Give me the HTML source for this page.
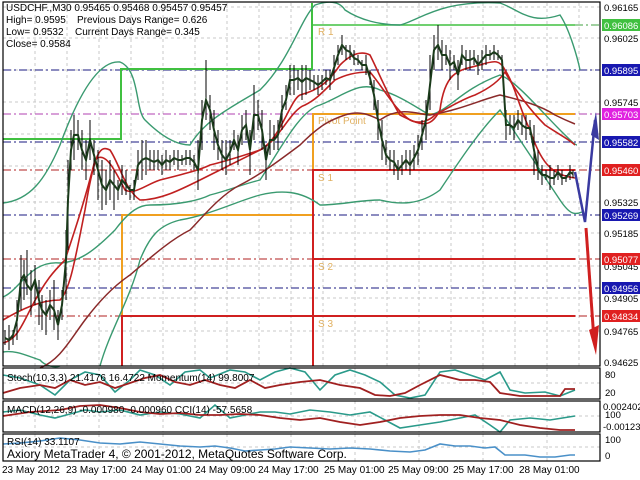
<!DOCTYPE html>
<html><head><meta charset="utf-8"><style>
html,body{margin:0;padding:0;background:#fff;width:640px;height:480px;overflow:hidden}
svg{display:block;font-family:"Liberation Sans",sans-serif}
</style></head><body>
<svg width="640" height="480" viewBox="0 0 640 480" xmlns="http://www.w3.org/2000/svg">
<rect width="640" height="480" fill="#fff"/>
<g stroke="#c8c8c8" stroke-width="1" stroke-dasharray="3,3">
<path d="M35 3V366M67 3V366M99 3V366M131 3V366M163 3V366M195 3V366M227 3V366M259 3V366M291 3V366M323 3V366M355 3V366M387 3V366M419 3V366M451 3V366M483 3V366M515 3V366M547 3V366M579 3V366"/>
<path d="M3 7H600M3 38H600M3 70H600M3 102H600M3 134H600M3 166H600M3 202H600M3 233H600M3 266H600M3 298H600M3 331H600"/>
<path d="M35 368V398M99 368V398M163 368V398M227 368V398M291 368V398M355 368V398M419 368V398M483 368V398M547 368V398M3 383H600"/>
<path d="M35 401V432M99 401V432M163 401V432M227 401V432M291 401V432M355 401V432M419 401V432M483 401V432M547 401V432M3 416H600"/>
<path d="M35 434V461M99 434V461M163 434V461M227 434V461M291 434V461M355 434V461M419 434V461M483 434V461M547 434V461M3 447H600"/>
</g>
<g stroke-width="1" stroke-dasharray="8,3,2,3">
<path d="M3 70H600M3 142H600M3 215H600M3 288H600" stroke="#1a1a80"/>
<path d="M3 114H600" stroke="#b040b0"/>
<path d="M3 170H600M3 259H600M3 316H600" stroke="#b02020"/>
<path d="M575 25H600" stroke="#40a040"/>
</g>
<g fill="none" stroke-width="2">
<path d="M3 139H121V69H312V3" stroke="#40c040"/>
<path d="M312 25H575" stroke="#40c040" stroke-width="1.5"/>
<path d="M122 366V215H313V114H575" stroke="#f0a020"/>
<path d="M122 366V316H313" stroke="#d02020"/>
<path d="M313 366V170H575M313 259H575M313 316H575" stroke="#d02020"/>
</g>
<g fill="#e0b060" font-size="10">
<text x="318" y="35">R 1</text><text x="318" y="124">Pivot Point</text><text x="318" y="181">S 1</text><text x="318" y="270">S 2</text><text x="318" y="327">S 3</text>
</g>
<g fill="none" stroke="#3a9a70" stroke-width="1.4">
<path d="M3 203C30 200 45 180 60 145C80 90 100 60 120 62C140 70 135 110 145 120C160 135 175 145 190 145C205 120 230 108 260 90C290 60 300 20 315 5C330 0 340 2 345 10C360 20 380 25 400 25C420 20 440 0 500 3C520 10 530 25 560 15C570 30 578 60 580 70"/>
<path d="M3 297C20 290 30 260 60 263C80 262 95 250 115 230C130 210 140 205 150 205C180 205 200 200 210 195C230 190 240 185 260 180C280 150 300 110 320 105C345 95 360 80 380 90C400 95 420 110 430 115C450 110 460 90 500 75C515 80 540 110 560 130C570 140 575 145 577 145"/>
<path d="M3 352C15 350 25 355 40 360C45 366 55 368 60 366M100 366C110 330 130 300 140 260C150 235 160 225 180 220C210 215 240 200 260 195C280 190 300 190 320 205C340 205 360 200 380 200C400 205 420 205 440 190C460 160 480 130 500 110C520 140 540 170 560 200C570 215 575 215 582 212"/>
</g>
<g fill="none" stroke="#8a2a2a" stroke-width="1.5">
<path d="M40 368C60 360 70 340 85 320C100 300 115 285 130 275C150 258 170 240 190 230C200 220 220 195 240 185C260 175 280 160 300 145C320 125 330 120 345 115C360 110 370 115 380 120C400 105 420 115 430 115C460 110 480 100 500 95C520 100 540 105 555 115C565 120 570 122 575 124"/>
</g>
<g fill="none" stroke="#c02020" stroke-width="1.6">
<path d="M3 343C15 340 20 330 30 310C45 280 55 270 65 260C75 230 85 200 95 160C105 150 115 170 125 190C135 195 145 185 160 180C180 175 200 170 210 165C230 160 245 155 260 150C280 140 290 110 305 105C315 100 320 95 335 80C345 75 355 72 370 72C385 90 395 110 410 120C420 125 430 120 435 115C445 110 460 100 475 95C490 88 500 80 505 72C515 90 530 110 545 125C560 135 570 140 575 145"/>
<path d="M3 320C20 310 40 300 60 300C70 290 75 260 85 210C95 150 100 145 110 150C120 165 125 190 140 200C160 200 180 190 200 180C220 170 240 160 260 150C280 140 290 100 300 95C320 90 330 80 340 65C350 55 360 50 370 55C380 75 390 100 400 115C420 125 430 130 440 110C445 70 460 70 480 65C495 60 500 60 505 70C515 85 520 110 530 130C540 160 550 175 575 178"/>
</g>
<g fill="none" stroke="#000" stroke-width="1">
<path d="M5 330V345M9 325V350M13 330V345M17 300V340M21 255V310M24 260V300M27 250V295M31 270V315M35 265V305M39 280V325M42 295V330M46 300V335M50 290V320M54 280V330M58 310V340M62 290V320M66 230V300M68 160V250M71 130V170M74 115V160M78 120V150M82 130V170M86 140V180M90 120V160M94 140V175M98 150V200M102 160V210M106 170V205M110 160V200M114 170V210M118 180V200M122 165V195M126 170V195M130 185V200M134 180V200M138 150V180M142 140V180M146 140V175M150 150V170M154 150V170M158 150V170M162 155V175M166 150V170M170 155V170M174 150V165M178 150V170M182 155V165M186 150V165M190 150V165M194 155V170M198 140V190M202 100V150M206 60V120M210 95V130M214 110V150M218 130V160M222 140V170M226 140V175M230 140V165M234 130V150M238 135V165M242 115V145M246 110V140M250 130V175M254 85V140M258 100V130M262 110V150M266 145V180M270 120V155M274 125V150M278 120V150M282 95V130M286 85V110M290 65V95M294 65V95M298 70V90M302 65V100M306 65V95M310 70V90M314 75V90M318 75V95M322 75V90M326 70V85M330 70V90M334 55V80M338 45V65M342 35V55M346 45V60M350 45V60M354 50V65M358 55V65M362 60V70M366 55V75M370 70V85M374 80V110M378 100V140M382 120V160M386 140V165M390 150V170M394 150V175M398 160V180M402 155V175M406 150V170M410 150V175M414 145V170M418 135V165M422 120V150M426 100V140M430 55V110M434 35V70M438 25V60M442 40V70M446 45V65M450 50V80M454 55V70M458 60V90M462 45V65M466 50V70M470 50V70M474 50V65M478 55V75M482 50V70M486 45V65M490 50V60M494 45V60M498 50V60M502 55V65M506 110V140M510 115V135M514 115V140M518 110V130M522 115V135M526 115V140M530 120V135M534 125V175M538 150V180M542 165V185M546 170V180M550 165V190M554 170V185M558 165V180M562 170V185M566 175V182M570 165V180M573 170V178"/>
</g>
<polyline fill="none" stroke="#1a3a1a" stroke-width="2" points="5,338 9,340 13,335 17,320 21,280 24,275 27,285 31,290 35,280 39,300 42,310 46,315 50,305 54,310 58,325 62,305 66,260 68,200 71,150 74,135 78,135 82,150 86,160 90,140 94,155 98,170 102,185 106,190 110,180 114,185 118,190 122,180 126,185 130,190 134,190 138,165 142,160 146,158 150,160 154,162 158,160 162,165 166,160 170,162 174,158 178,160 182,160 186,158 190,158 194,162 198,170 202,120 206,100 210,110 214,130 218,145 222,155 226,160 230,152 234,140 238,150 242,130 246,125 250,150 254,115 258,115 262,130 266,160 270,140 274,140 278,135 282,110 286,100 290,80 294,80 298,78 302,82 306,78 310,80 314,82 318,85 322,82 326,78 330,80 334,68 338,55 342,45 346,50 350,52 354,58 358,60 362,65 366,65 370,78 374,95 378,120 382,140 386,155 390,160 394,162 398,170 402,165 406,160 410,165 414,158 418,150 422,135 426,120 430,85 434,50 438,45 442,55 446,55 450,65 454,62 458,75 462,55 466,60 470,60 474,58 478,65 482,60 486,55 490,55 494,52 498,55 502,60 506,125 510,125 514,128 518,120 522,125 526,128 530,128 534,150 538,170 542,175 546,175 550,178 554,178 558,172 562,178 566,178 570,172 573,174"/>
<path d="M575 172L585 222L595 120" fill="none" stroke="#3a3aa0" stroke-width="2.5"/>
<path d="M591 135L596 112L599 140Z" fill="#3a3aa0"/>
<path d="M586 228L594 340" fill="none" stroke="#d02020" stroke-width="3"/>
<path d="M589 330L596 355L599 325Z" fill="#d02020"/>
<g font-size="10" fill="#000">
<text x="6" y="11">USDCHF.,M30  0.95465 0.95468 0.95457 0.95457</text>
<text x="6" y="23">High= 0.9595</text><text x="77" y="23">Previous Days Range= 0.626</text>
<text x="6" y="35">Low= 0.9532</text><text x="75" y="35">Current Days Range= 0.345</text>
<text x="6" y="47">Close= 0.9584</text>
</g>
<g font-size="9.5" fill="#000">
<text x="604" y="11">0.96165</text><text x="604" y="42">0.96025</text><text x="604" y="106">0.95745</text><text x="604" y="206">0.95325</text><text x="604" y="237">0.95185</text><text x="604" y="270">0.95045</text><text x="604" y="302">0.94905</text><text x="604" y="335">0.94765</text><text x="604" y="366">0.94625</text>
</g>
<g font-size="9.5" fill="#fff">
<rect x="602" y="19" width="38" height="12" fill="#40c040"/><text x="604" y="29">0.96086</text>
<rect x="602" y="64" width="38" height="12" fill="#1818b0"/><text x="604" y="74">0.95895</text>
<rect x="602" y="108" width="38" height="12" fill="#e020e0"/><text x="604" y="118">0.95703</text>
<rect x="602" y="136" width="38" height="12" fill="#1818b0"/><text x="604" y="146">0.95582</text>
<rect x="602" y="164" width="38" height="12" fill="#e02020"/><text x="604" y="174">0.95460</text>
<rect x="602" y="209" width="38" height="12" fill="#1818b0"/><text x="604" y="219">0.95269</text>
<rect x="602" y="253" width="38" height="12" fill="#e02020"/><text x="604" y="263">0.95077</text>
<rect x="602" y="282" width="38" height="12" fill="#1818b0"/><text x="604" y="292">0.94956</text>
<rect x="602" y="310" width="38" height="12" fill="#e02020"/><text x="604" y="320">0.94834</text>
</g>
<g fill="none" stroke="#2a9a8a" stroke-width="1.6">
<polyline points="3,375 20,378 40,385 55,395 70,380 85,372 100,375 115,392 130,380 140,370 155,375 170,385 185,372 200,370 210,378 230,370 245,372 260,380 275,372 290,368 305,372 320,390 335,375 350,370 365,375 380,382 395,395 410,398 425,395 440,372 455,370 470,375 485,380 500,372 510,390 525,393 545,392 560,396 575,390"/>
<polyline points="3,412 20,410 40,415 55,418 70,414 85,410 100,412 120,410 140,415 160,412 180,414 200,418 215,405 230,418 245,415 260,412 275,412 290,414 310,410 330,412 350,415 370,412 385,420 400,428 420,425 440,422 460,418 475,415 490,425 500,432 510,420 530,418 550,420 575,416"/>
</g>
<g fill="none" stroke="#a02020" stroke-width="1.8">
<polyline points="3,393 20,388 40,385 55,388 70,380 85,385 100,382 115,388 130,383 145,378 160,375 175,382 190,385 205,380 220,385 235,388 250,380 265,388 280,385 300,382 320,380 340,385 360,388 375,395 390,396 405,393 420,385 440,375 460,380 475,380 490,382 500,393 520,396 540,396 560,396 565,389 575,389"/>
<polyline points="3,416 30,412 60,410 80,406 100,405 120,408 140,412 160,414 180,413 200,415 220,415 240,414 260,415 280,418 300,420 320,418 340,422 360,425 380,422 400,418 420,416 440,415 460,415 480,418 500,420 520,425 540,428 560,430 575,430"/>
</g>
<polyline fill="none" stroke="#4a90c8" stroke-width="1.6" points="3,444 20,443 40,441 60,438 80,440 100,443 120,444 140,442 160,444 180,446 200,447 215,446 230,448 245,451 260,450 275,449 290,447 310,448 330,449 350,448 370,449 390,451 410,452 425,450 440,444 455,446 470,446 485,448 495,447 505,455 525,455 540,457 555,457 570,455 575,455"/>
<g fill="none" stroke="#000" stroke-width="1.2">
<rect x="3" y="2" width="597" height="364"/>
<rect x="3" y="368" width="597" height="31"/>
<rect x="3" y="401" width="597" height="31"/>
<rect x="3" y="434" width="597" height="27"/>
</g>
<g font-size="10" fill="#000">
<text x="7" y="381">Stoch(10,3,3) 21.4176 16.4722  Momentum(14) 99.8007</text>
<text x="7" y="413">MACD(12,26,9) -0.000980 -0.000960  CCI(14) -57.5658</text>
<text x="7" y="445">RSI(14) 33.1107</text>
</g>
<g font-size="9.5" fill="#000">
<text x="605" y="378">80</text><text x="605" y="396">20</text>
<text x="603" y="410">0.002402</text><text x="605" y="418">100</text><text x="603" y="430">-0.00123</text>
<text x="605" y="443">100</text><text x="605" y="459">0</text>
</g>
<text x="7" y="458" font-size="12" fill="#000">Axiory MetaTrader 4, © 2001-2012, MetaQuotes Software Corp.</text>
<g font-size="10" fill="#000">
<text x="2" y="473">23 May 2012</text><text x="66" y="473">23 May 17:00</text><text x="131" y="473">24 May 01:00</text><text x="195" y="473">24 May 09:00</text><text x="258" y="473">24 May 17:00</text><text x="324" y="473">25 May 01:00</text><text x="388" y="473">25 May 09:00</text><text x="453" y="473">25 May 17:00</text><text x="519" y="473">28 May 01:00</text>
</g>
</svg>
</body></html>
